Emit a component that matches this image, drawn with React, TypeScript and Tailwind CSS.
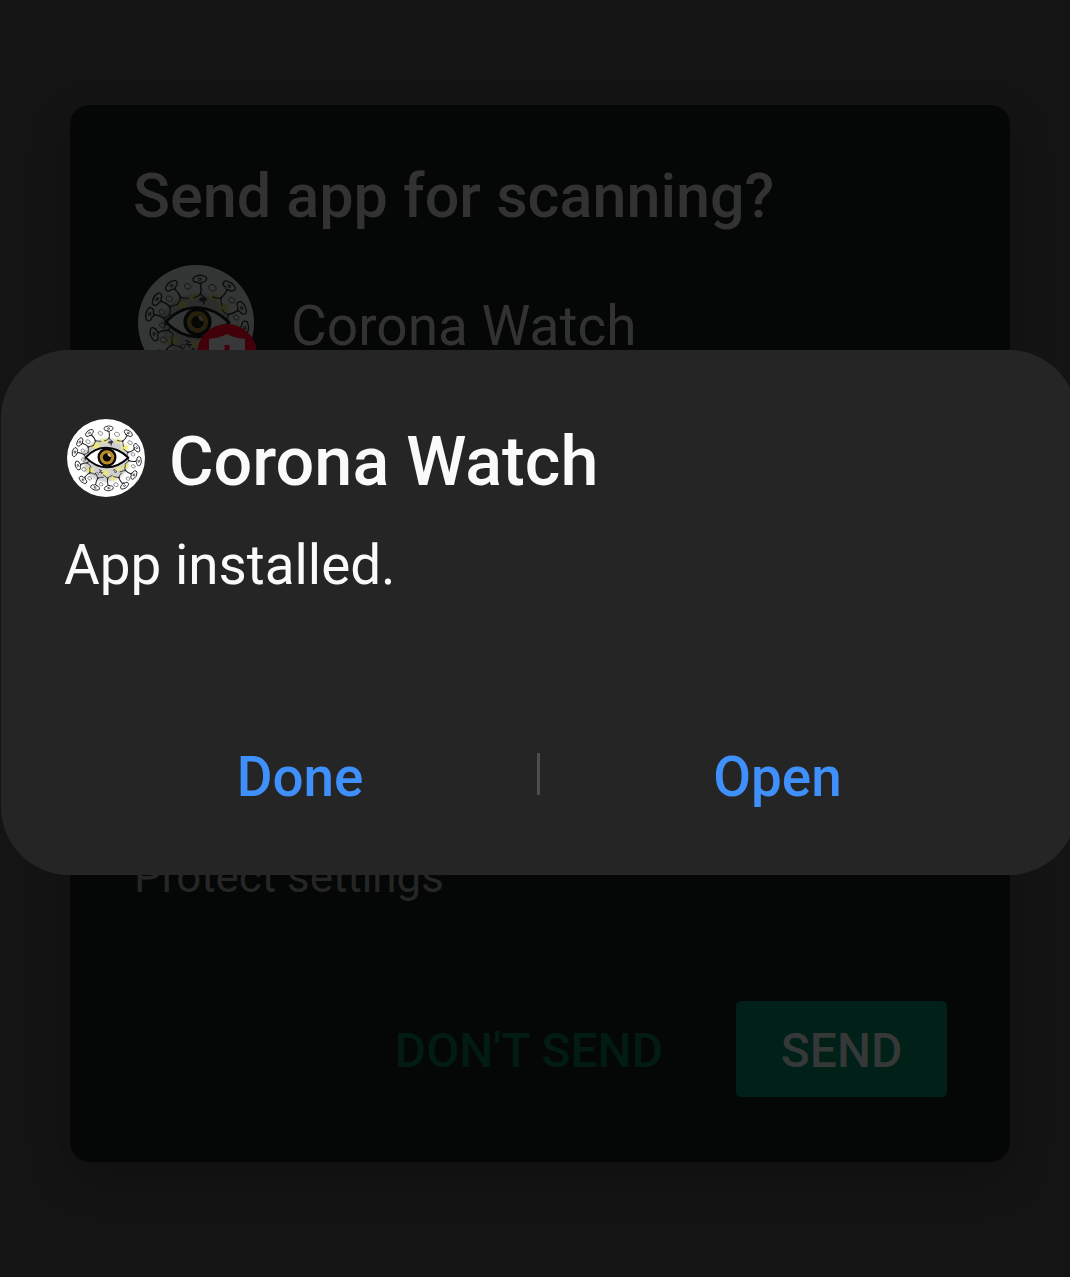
const spikes = [
  { x: 158, y: 62, r: 0 },
  { x: 101, y: 75, r: -35 },
  { x: 72, y: 102, r: -57 },
  { x: 57, y: 132, r: -72 },
  { x: 66, y: 172, r: -102 },
  { x: 81, y: 215, r: -133 },
  { x: 117, y: 238, r: -160 },
  { x: 158, y: 240, r: 176 },
  { x: 205, y: 233, r: 148 },
  { x: 233, y: 201, r: 121 },
  { x: 248, y: 160, r: 96 },
  { x: 242, y: 120, r: 66 },
  { x: 217, y: 76, r: 38 },
];

const bubbles = [
  [133, 76, 7], [183, 79, 8], [96, 101, 7], [81, 128, 6], [82, 155, 6], [84, 184, 7], [101, 211, 6],
  [135, 229, 6], [180, 230, 7], [222, 104, 7], [231, 139, 6], [232, 175, 6], [216, 212, 6], [123, 197, 5],
];

const glows = [
  [121, 113, 12], [144, 99, 9], [186, 99, 9], [207, 119, 11], [103, 186, 11], [149, 194, 10], [187, 183, 9], [171, 211, 9], [209, 175, 9],
];

function EyeLogo({ className }: { className: string }) {
  return (
    <svg viewBox="33 33 234 234" className={className}>
      <defs>
        <filter id="soft" x="-50%" y="-50%" width="200%" height="200%">
          <feGaussianBlur stdDeviation="2.5" />
        </filter>
        <clipPath id="disc"><circle cx="150" cy="150" r="117" /></clipPath>
      </defs>
      <circle cx="150" cy="150" r="117" fill="#fff" />
      <g clipPath="url(#disc)">
        <ellipse cx="150" cy="156" rx="69" ry="66" fill="#c4c4c6" opacity=".8" filter="url(#soft)" />
        <path d="M82 112 Q104 78 150 82 T220 116 Q208 96 186 91 T140 92 T98 111Z" fill="#fff" opacity=".7" />
        {glows.map(([x, y, r]) => (
          <ellipse key={`${x}-${y}`} cx={x} cy={y} rx={r} ry={r * 0.75} fill="#eeea76" filter="url(#soft)" />
        ))}
        <g fill="none" stroke="#55555a" strokeWidth="1.8">
          {bubbles.map(([x, y, r]) => (
            <ellipse key={`${x}-${y}`} cx={x} cy={y} rx={r} ry={r * 0.75} transform={`rotate(25 ${x} ${y})`} />
          ))}
          <path d="M157 103q7-7 13-1l-4 4-9-2 10-2-2 11" stroke="#2c2c30" strokeWidth="3" />
          <path d="M129 185l8 3-7 5 10 1-5 5M171 187q7-5 10 2t-7 2" stroke="#2c2c30" strokeWidth="2.4" />
        </g>
        {spikes.map(({ x, y, r }) => (
          <g key={`${x}-${y}`} transform={`translate(${x} ${y}) rotate(${r})`} fill="none" stroke="#202024" strokeLinecap="round" strokeLinejoin="round">
            <path d="M-3 7q-2-2-5-1-6-1-6-6t6-6q8-4 15-1 8 2 6 7-2 6-9 6-1 5-7 1Z" fill="#fff" strokeWidth="2.6" />
            <path d="M-4-1l5-2 2 4-5 1" strokeWidth="2" />
            <path d="M1 8Q4 19 1 31" strokeWidth="3" />
            <path d="M1 28q-3 7-14 9M1 28q4 6 12 12" strokeWidth="2.2" />
          </g>
        ))}
        <path d="M89 148 Q116 119 151 119 T217 149 Q184 179 151 178 T89 148Z" fill="#fff" stroke="#050505" strokeWidth="6" strokeLinejoin="round" />
        <circle cx="153" cy="148" r="25" fill="#b88d27" stroke="#080808" strokeWidth="7" />
        <circle cx="153" cy="148" r="12.5" fill="#080808" />
        <path d="M154 138q3 9 11 9 0-7-5-10t-6 1Z" fill="#ead29a" />
      </g>
    </svg>
  );
}

function ThreatBadge() {
  return (
    <svg viewBox="0 0 60 60" className="absolute left-[59px] top-[59px] size-[60px]">
      <circle cx="30" cy="30" r="30" fill="#42000a" />
      <path d="M12 15Q23 14 30 10Q37 14 48 15V29Q48 43 30 51Q12 43 12 29Z" fill="#38383a" />
      <path d="M27.5 21h5v16h-5zM27.5 41h5v5h-5z" fill="#42000a" />
    </svg>
  );
}

export default function App() {
  return (
    <div className="relative h-[1277px] w-[1070px] overflow-hidden bg-[#141414] pt-[105px] font-['Roboto',sans-serif]">
      <section className="ml-[70px] flex h-[1057px] w-[940px] flex-col rounded-[20px] bg-[#050706] px-16 pt-[56px] shadow-[0_16px_40px_rgba(0,0,0,0.18)]">
        <h1 className="ml-[-1px] whitespace-nowrap text-[61.1px] font-medium leading-[70px] text-[#323232]">Send app for scanning?</h1>
        <div className="mt-[34px] flex h-[116px] items-center">
          <div className="relative ml-1 size-[116px] shrink-0">
            <EyeLogo className="size-[116px] opacity-[0.19]" />
            <ThreatBadge />
          </div>
          <span className="ml-[37px] mt-[6px] whitespace-nowrap text-[55px] leading-[66px] text-[#323232]">Corona Watch</span>
        </div>
        <p className="mt-[470px] whitespace-nowrap text-[43.9px] leading-[52px] text-[#252626]">Protect settings</p>
        <div className="mt-[98px] flex items-center justify-end">
          <button className="mr-[73px] mt-[3px] whitespace-nowrap text-[48px] font-medium leading-[56px] text-[#021b14]">DON'T SEND</button>
          <button className="mr-[-1px] h-24 w-[211px] rounded-[5px] bg-[#002018] pt-[3px] text-[48px] font-medium text-[#353837]">SEND</button>
        </div>
      </section>

      <section className="absolute left-px top-[350px] h-[525px] w-[1076px] rounded-[68px] bg-[#252525] pl-16 pt-[64px]">
        <header className="flex items-center">
          <EyeLogo className="ml-[2px] size-[78px]" />
          <h2 className="ml-[24px] mt-[8px] whitespace-nowrap text-[68.3px] font-medium leading-[80px] text-[#fafafa]">Corona Watch</h2>
        </header>
        <p className="ml-[-1px] mt-[31px] whitespace-nowrap text-[54.8px] leading-[64px] text-[#fafafa]">App installed.</p>
        <footer className="mt-[145px] flex h-[70px] items-center text-[54.8px] font-medium leading-[70px] text-[#4090fb]">
          <button className="w-[472px] pr-[2px]">Done</button>
          <span className="mt-[-6px] h-[42px] w-[3px] bg-[#4d4d4d]" />
          <button className="w-[475px]">Open</button>
        </footer>
      </section>
    </div>
  );
}
